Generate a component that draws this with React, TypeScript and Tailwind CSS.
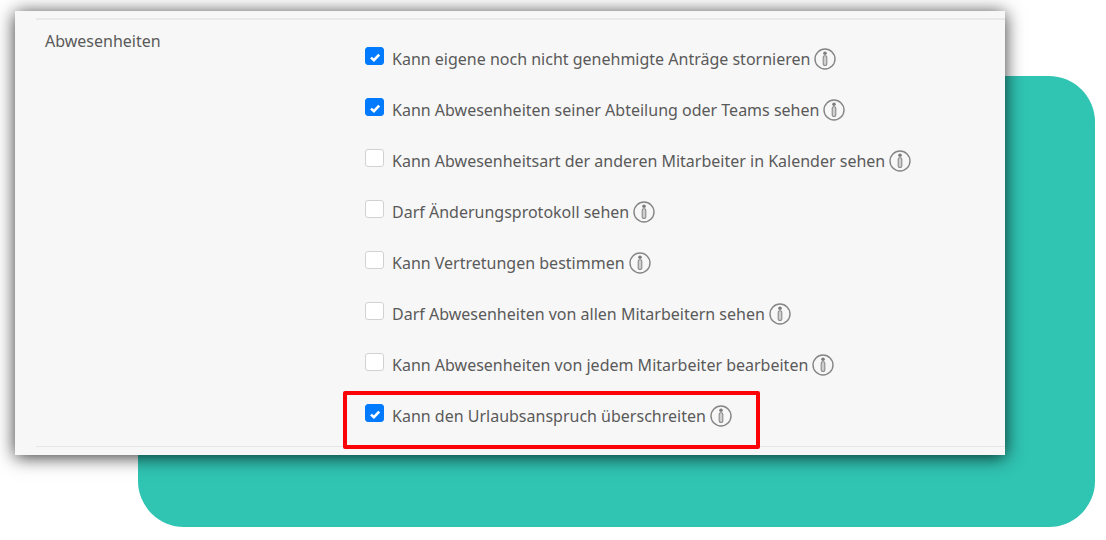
// libs
import {useState} from 'react';
import cn from 'clsx';

type Permission = {
  id: string;
  label: string;
  checked: boolean;
  highlighted?: boolean;
};

const initialPermissions: Permission[] = [
  {
    id: 'cancel-own',
    label: 'Kann eigene noch nicht genehmigte Anträge stornieren',
    checked: true,
  },
  {
    id: 'see-team',
    label: 'Kann Abwesenheiten seiner Abteilung oder Teams sehen',
    checked: true,
  },
  {
    id: 'see-type',
    label: 'Kann Abwesenheitsart der anderen Mitarbeiter in Kalender sehen',
    checked: false,
  },
  {id: 'see-log', label: 'Darf Änderungsprotokoll sehen', checked: false},
  {id: 'substitutes', label: 'Kann Vertretungen bestimmen', checked: false},
  {
    id: 'see-all',
    label: 'Darf Abwesenheiten von allen Mitarbeitern sehen',
    checked: false,
  },
  {
    id: 'edit-all',
    label: 'Kann Abwesenheiten von jedem Mitarbeiter bearbeiten',
    checked: false,
  },
  {
    id: 'exceed',
    label: 'Kann den Urlaubsanspruch überschreiten',
    checked: true,
    highlighted: true,
  },
];

const InfoIcon = () => (
  <svg className="w-[22px] h-[22px]" viewBox="0 0 22 22" fill="none" aria-hidden="true">
    <circle cx="11" cy="11" r="10" stroke="#858585" strokeWidth="1.4" />
    <circle cx="11" cy="5.2" r="1.8" fill="#7c7c7c" />
    <rect x="9.2" y="7.8" width="3.6" height="9.6" rx="1.4" fill="#cfcfcf" stroke="#8a8a8a" strokeWidth="1.1" />
  </svg>
);

const PermissionRow = ({
  permission,
  onToggle,
}: {
  permission: Permission;
  onToggle: () => void;
}) => {
  const {id, label, checked, highlighted} = permission;

  return (
    <li className="relative flex w-fit">
      <span className="relative mr-2 h-[18px] w-[19px] shrink-0">
        <input
          id={id}
          type="checkbox"
          checked={checked}
          onChange={onToggle}
          className={cn(
            'block h-full w-full appearance-none rounded-[3px] border',
            checked ? 'border-[#007bff] bg-[#007bff]' : 'border-[#d2d2d2] bg-white',
          )}
        />
        {checked && (
          <svg
            className="pointer-events-none absolute inset-0 h-full w-full"
            viewBox="0 0 19 18"
            aria-hidden="true">
            <path
              d="M6 10.6 L8.9 13.2 L14.2 7.6"
              fill="none"
              stroke="#fff"
              strokeWidth="2.6"
            />
          </svg>
        )}
      </span>
      <label htmlFor={id} className="mr-1 leading-6">
        {label}
      </label>
      <button type="button" aria-label="Info" className="h-6 shrink-0">
        <InfoIcon />
      </button>
      {highlighted && (
        <span className="pointer-events-none absolute -top-[13px] -right-7 -bottom-[21px] -left-[22px] rounded-[2px] border-4 border-[#fb0207]" />
      )}
    </li>
  );
};

export default function App() {
  const [permissions, setPermissions] = useState<Permission[]>(initialPermissions);

  const toggle = (id: string) =>
    setPermissions(list =>
      list.map(p => (p.id === id ? {...p, checked: !p.checked} : p)),
    );

  return (
    <main className="grid bg-white pt-[11px] pr-[11px] pb-[13px] pl-[15px] font-['Noto_Sans','Open_Sans',sans-serif] text-[16px] text-[#5a5a5a]">
      {/* backdrop */}
      <div className="col-start-1 row-start-1 mt-[65px] ml-[123px] rounded-[46px] bg-[#30c4b3]" />

      {/* card */}
      <section className="z-10 col-start-1 row-start-1 mr-[90px] mb-[72px] bg-[#f7f7f7] pt-[7px] pb-2 shadow-[0_2px_17px_rgba(0,0,0,0.8)]">
        <div className="ml-[21px] border-t-2 border-b border-t-[#e9e9e9] border-b-[#e6e6e6] pt-[9px] pb-[18px] pl-[9px]">
          <div className="flex">
            <h2 className="w-80 shrink-0 leading-6">Abwesenheiten</h2>
            <ul className="mt-[18px] flex flex-col gap-[27px]">
              {permissions.map(p => (
                <PermissionRow
                  key={p.id}
                  permission={p}
                  onToggle={() => toggle(p.id)}
                />
              ))}
            </ul>
          </div>
        </div>
      </section>
    </main>
  );
}
